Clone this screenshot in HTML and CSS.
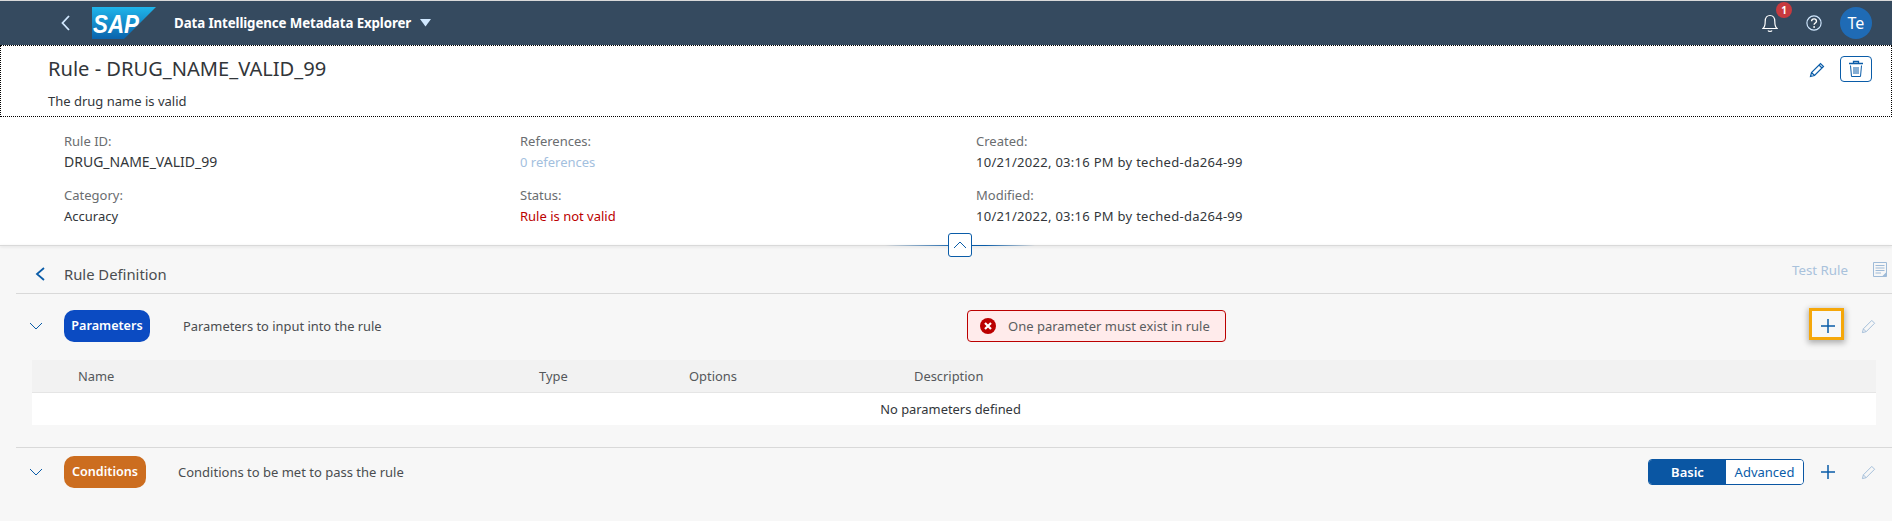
FILE: index.html
```html
<!DOCTYPE html>
<html lang="en">
<head>
<meta charset="utf-8">
<title>Rule - DRUG_NAME_VALID_99</title>
<link rel="stylesheet" href="styles.css">
</head>
<body>
<header class="shell">
  <svg class="back" width="14" height="18" viewBox="0 0 14 18"><path d="M10 2 L3.500 9 L10 16" fill="none" stroke="#d1e8ff" stroke-width="1.800"/></svg>
  <svg class="logo" width="64" height="32" viewBox="0 0 64 32">
    <defs><linearGradient id="g" x1="0" y1="0" x2="0" y2="1"><stop offset="0" stop-color="#1fb5ea"/><stop offset="1" stop-color="#0a63ac"/></linearGradient></defs>
    <path d="M0 0H64L32 32H0Z" fill="url(#g)"/>
    <text x="1" y="26" class="logo-text" textLength="46" lengthAdjust="spacingAndGlyphs">SAP</text>
  </svg>
  <span class="app">Data Intelligence Metadata Explorer</span>
  <svg class="caret" width="12" height="8" viewBox="0 0 12 8"><path d="M0 0H11L5.500 7.500Z" fill="#d1e8ff"/></svg>
  <div class="shell-end">
    <div class="bell">
      <svg width="16" height="20" viewBox="0 0 16 20"><path d="M1 15.500C2.800 14 3.200 12 3.200 8.500 3.200 4 5.200 2.500 8 2.500s4.800 1.500 4.800 6c0 3.500.4 5.500 2.200 7ZM6 17.500c.5 1.200 3.500 1.200 4 0" fill="none" stroke="#fff" stroke-width="1.200"/></svg>
      <span class="badge">1</span>
    </div>
    <svg class="help" width="16" height="16" viewBox="0 0 18 18"><circle cx="9" cy="9" r="8" fill="none" stroke="#d1e8ff" stroke-width="1.300"/><path d="M6.300 7c0-3.400 5.500-3.400 5.500 0 0 2-2.700 2-2.700 4" fill="none" stroke="#fff" stroke-width="1.500"/><circle cx="9.100" cy="13.500" r="1" fill="#fff"/></svg>
    <span class="avatar">Te</span>
  </div>
</header>

<section class="title-band">
  <div class="title-text">
    <h1>Rule - DRUG_NAME_VALID_99</h1>
    <p>The drug name is valid</p>
  </div>
  <div class="title-actions">
    <svg width="16" height="16" viewBox="0 0 16 16"><path d="M1.500 14.500l1-4L11.500 1.500l3 3-9 9ZM2.500 10.500l3 3M10 3l3 3" fill="none" stroke="#0a5ca8" stroke-width="1.200"/></svg>
    <button class="icon-btn">
      <svg width="16" height="18" viewBox="0 0 16 18"><path d="M1 3.500H15M5.500 3.500V1.500H10.500V3.500" fill="none" stroke="#0a5ca8" stroke-width="1.300"/><path d="M2.500 5.500L3.500 16.500H12.500L13.500 5.500M6 7V14M8 7V14M10 7V14" fill="none" stroke="#0a5ca8"/></svg>
    </button>
  </div>
</section>

<section class="details">
  <div class="field"><span class="label">Rule ID:</span><span class="value-caps">DRUG_NAME_VALID_99</span></div>
  <div class="field"><span class="label">References:</span><span class="muted-link">0 references</span></div>
  <div class="field"><span class="label">Created:</span><span class="value-date">10/21/2022, 03:16 PM by teched-da264-99</span></div>
  <div class="field"><span class="label">Category:</span><span>Accuracy</span></div>
  <div class="field"><span class="label">Status:</span><span class="error-text">Rule is not valid</span></div>
  <div class="field"><span class="label">Modified:</span><span class="value-date">10/21/2022, 03:16 PM by teched-da264-99</span></div>
</section>

<div class="collapse-bar">
  <button class="collapse-btn"><svg width="14" height="8" viewBox="0 0 14 8"><path d="M1 7L7 1L13 7" fill="none" stroke="#0a5ca8"/></svg></button>
</div>

<main class="content">
  <div class="toolbar">
    <svg class="tool-back" width="12" height="16" viewBox="0 0 12 16"><path d="M10 2L3 8L10 14" fill="none" stroke="#0a5ca8" stroke-width="1.800"/></svg>
    <span class="toolbar-title">Rule Definition</span>
    <span class="test-rule">Test Rule</span>
    <svg class="doc" width="14" height="15" viewBox="0 0 14 15"><path d="M.5.5H13.500V14.500H.5ZM2.500 3.500H11.500M2.500 6H11.500M2.500 8.500H11.500M2.500 11H8" fill="none" stroke="#9fbbd8"/><path d="M9 14.500L13.500 10V14.500Z" fill="#9fbbd8"/></svg>
  </div>

  <div class="section-row section-params">
    <svg class="chev" width="14" height="8" viewBox="0 0 14 8"><path d="M1 1L7 7L13 1" fill="none" stroke="#0a5ca8"/></svg>
    <span class="pill pill-blue">Parameters</span>
    <span class="section-desc desc-params">Parameters to input into the rule</span>
    <div class="error-box">
      <svg width="16" height="16" viewBox="0 0 16 16"><circle cx="8" cy="8" r="8" fill="#bb0000"/><path d="M5 5L11 11M11 5L5 11" stroke="#fff" stroke-width="2.200"/></svg>
      <span>One parameter must exist in rule</span>
    </div>
    <div class="row-actions">
      <button class="plus plus-focus"><svg width="14" height="14" viewBox="0 0 14 14"><path d="M7 0V14M0 7H14" stroke="#0a5ca8" stroke-width="1.500"/></svg></button>
      <svg class="pencil" width="15" height="15" viewBox="0 0 16 16"><path d="M1.500 14.500l1-4L11.500 1.500l3 3-9 9ZM2.500 10.500l3 3" fill="none" stroke="#9fbbd8"/></svg>
    </div>
  </div>

  <div class="table">
    <div class="thead">
      <span class="col-name">Name</span><span class="col-type">Type</span><span class="col-options">Options</span><span>Description</span>
    </div>
    <div class="tbody">No parameters defined</div>
  </div>

  <div class="section-row section-conditions">
    <svg class="chev" width="14" height="8" viewBox="0 0 14 8"><path d="M1 1L7 7L13 1" fill="none" stroke="#0a5ca8"/></svg>
    <span class="pill pill-orange">Conditions</span>
    <span class="section-desc desc-conditions">Conditions to be met to pass the rule</span>
    <div class="row-actions">
      <div class="segmented"><span class="seg seg-on">Basic</span><span class="seg">Advanced</span></div>
      <button class="plus"><svg width="14" height="14" viewBox="0 0 14 14"><path d="M7 0V14M0 7H14" stroke="#0a5ca8" stroke-width="1.500"/></svg></button>
      <svg class="pencil" width="15" height="15" viewBox="0 0 16 16"><path d="M1.500 14.500l1-4L11.500 1.500l3 3-9 9ZM2.500 10.500l3 3" fill="none" stroke="#9fbbd8"/></svg>
    </div>
  </div>
</main>
</body>
</html>
```
FILE: styles.css
```css
* { box-sizing: border-box; }
html, body { margin: 0; padding: 0; }
body {
  width: 1892px;
  height: 521px;
  overflow: hidden;
  background: #f7f7f7;
  color: #32363a;
  font: 14px/20px "Noto Sans", "Liberation Sans", sans-serif;
  border-top: 1px solid #d9d9d9;
}
button { padding: 0; font: inherit; background: none; border: 0; }
svg { display: block; flex: none; }

.shell {
  height: 44px;
  background: #354a5f;
  display: flex;
  align-items: center;
  padding-left: 59px;
  color: #fff;
}
.logo { margin-left: 19px; }
.logo-text { font: italic 700 26px "Liberation Sans", sans-serif; fill: #fff; }
.app { margin-left: 18px; font-size: 13.3px; font-weight: 700; letter-spacing: -.1px; }
.caret { margin-left: 9px; }
.shell-end { margin-left: auto; display: flex; align-items: center; padding-right: 20px; }
.bell { position: relative; margin-right: 28px; }
.badge {
  position: absolute; top: -11px; left: 14px;
  width: 16px; height: 16px; border-radius: 50%;
  background: #c83a3f; color: #fff;
  font-size: 10px; font-weight: 700; line-height: 16px; text-align: center;
}
.help { margin-right: 18px; }
.avatar {
  width: 32px; height: 32px; border-radius: 50%;
  background: #1f6bb5; color: #fff;
  font-size: 16px; line-height: 32px; text-align: center;
}

.title-band {
  height: 72px;
  background: #fff;
  border: 1px dotted #000;
  display: flex;
  justify-content: space-between;
  padding: 0 19px 0 47px;
}
.title-text h1 { margin: 9px 0 0; font-size: 20.1px; font-weight: 400; line-height: 28px; }
.title-text p { margin: 9px 0 0; font-size: 13px; line-height: 18px; }
.title-actions { display: flex; align-items: flex-start; gap: 15px; padding-top: 10px; }
.title-actions > svg { margin-top: 6px; }
.icon-btn {
  width: 32px; height: 26px;
  border: 1px solid #0a5ca8; border-radius: 4px; background: #fff;
  display: flex; align-items: center; justify-content: center;
}

.details {
  height: 128px;
  background: #fff;
  display: grid;
  grid-template-columns: 456px 456px 1fr;
  grid-auto-rows: 54px;
  padding: 15px 0 0 64px;
  font-size: 13px;
}
.field { display: flex; flex-direction: column; gap: 3px; line-height: 18px; }
.label { color: #6a6d70; }
.value-caps { font-size: 14px; }
.value-date { letter-spacing: .28px; }
.muted-link { color: #a3c0de; }
.error-text { color: #bb0000; }

.collapse-bar {
  height: 1px;
  background: linear-gradient(90deg, transparent 885px, #0a5ca8 960px, #0a5ca8 985px, transparent 1035px), #d9d9d9;
  box-shadow: 0 1px 3px rgba(0,0,0,.15);
  position: relative;
}
.collapse-btn {
  position: absolute; top: -12px; left: 948px;
  width: 24px; height: 24px;
  background: #fff; border: 1px solid #0a5ca8; border-radius: 3px;
  display: flex; align-items: center; justify-content: center;
}

.content { padding: 0 0 0 16px; }
.toolbar {
  height: 48px;
  border-bottom: 1px solid #d9d9d9;
  display: flex; align-items: center;
  padding: 0 5px 0 18px;
}
.tool-back { margin-top: 8px; }
.toolbar-title { margin: 8px 0 0 18px; font-size: 14.8px; color: #4a4d50; }
.test-rule { margin-left: auto; color: #a9c2dc; font-size: 13.3px; }
.doc { margin-left: 25px; }

.section-row {
  display: flex; align-items: center;
  position: relative;
  padding-left: 13px;
}
.section-params { height: 66px; padding-bottom: 2px; }
.chev { margin-right: 21px; }
.pill {
  height: 32px; border-radius: 10px; text-align: center;
  color: #fff; font-size: 12.6px; font-weight: 600; line-height: 32px;
}
.pill-blue { width: 86px; background: #0b4bc2; }
.pill-orange { width: 82px; background: #cc6d1f; }
.section-desc { font-size: 13px; color: #4a4d50; }
.desc-params { margin-left: 33px; font-size: 12.9px; }
.desc-conditions { margin-left: 32px; }
.error-box {
  position: absolute; left: 951px; top: 16px;
  width: 259px; height: 32px;
  background: #ffebeb; border: 1px solid #bb0000; border-radius: 4px;
  display: flex; align-items: center; gap: 12px; padding-left: 12px;
  font-size: 13px; color: #5a5d60;
}
.row-actions { margin-left: auto; display: flex; align-items: center; padding-right: 16px; }
.plus { width: 35px; height: 32px; padding-left: 3px; display: flex; align-items: center; justify-content: center; }
.plus-focus {
  margin-top: -4px; padding-top: 4px;
  outline: 3px solid #f5a70a; outline-offset: -3px;
  box-shadow: 0 2px 6px 1px rgba(0,0,0,.3);
}
.pencil { margin-left: 17px; }

.table { margin: 0 16px; font-size: 12.9px; }
.thead {
  height: 33px; background: #f2f2f2; color: #55585b;
  display: flex; align-items: center;
  border-bottom: 1px solid #e5e5e5;
  padding-left: 46px;
}
.col-name { width: 461px; }
.col-type { width: 150px; }
.col-options { width: 225px; }
.tbody { height: 32px; padding-right: 7px; background: #fff; text-align: center; line-height: 33px; }

.section-conditions { margin-top: 22px; border-top: 1px solid #d9d9d9; height: 41px; align-items: flex-start; padding-top: 8px; }
.section-conditions .chev { margin-top: 12px; }
.section-conditions .section-desc { line-height: 32px; }
.section-conditions .row-actions { height: 32px; }
.segmented {
  display: flex; width: 156px; height: 26px; margin-right: 5px;
  border: 1px solid #0a56a3; border-radius: 4px; overflow: hidden;
  font-size: 13px; line-height: 24px;
}
.seg { flex: 1; text-align: center; background: #fff; color: #0a5ca8; }
.seg-on { flex: none; width: 77px; background: #0a56a3; color: #fff; font-weight: 600; }
```
